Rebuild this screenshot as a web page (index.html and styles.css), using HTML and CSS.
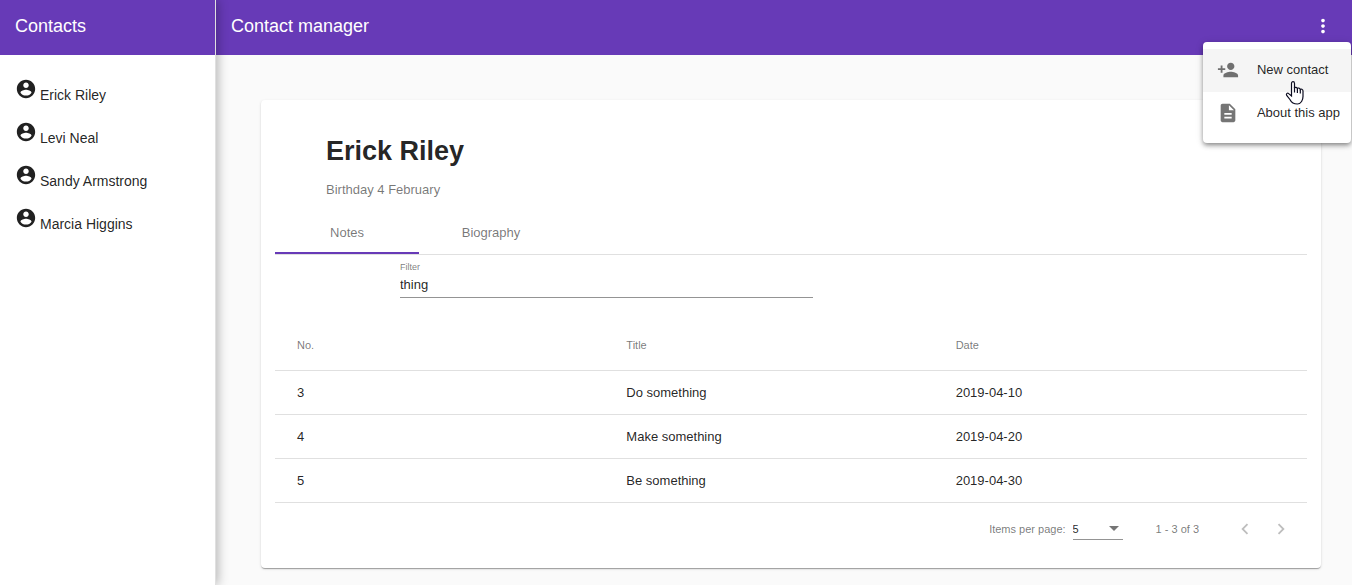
FILE: index.html
```html
<!DOCTYPE html>
<html lang="en">
<head>
<meta charset="utf-8">
<title>Contact manager</title>
<link rel="stylesheet" href="styles.css">
</head>
<body>
<svg class="sprite" aria-hidden="true">
  <symbol id="account" viewBox="0 0 24 24"><path d="M12 2C6.48 2 2 6.48 2 12s4.48 10 10 10 10-4.48 10-10S17.52 2 12 2zm0 3c1.66 0 3 1.34 3 3s-1.34 3-3 3-3-1.34-3-3 1.34-3 3-3zm0 14.2c-2.500 0-4.710-1.280-6-3.220.03-1.990 4-3.080 6-3.080 1.990 0 5.970 1.090 6 3.080-1.290 1.940-3.500 3.220-6 3.220z"/></symbol>
</svg>
<div class="app">
  <aside class="sidebar">
    <div class="toolbar">Contacts</div>
    <nav class="contacts" aria-label="Contacts">
      <a class="contact" href="#erick"><svg class="icon"><use href="#account"/></svg>Erick Riley</a>
      <a class="contact" href="#levi"><svg class="icon"><use href="#account"/></svg>Levi Neal</a>
      <a class="contact" href="#sandy"><svg class="icon"><use href="#account"/></svg>Sandy Armstrong</a>
      <a class="contact" href="#marcia"><svg class="icon"><use href="#account"/></svg>Marcia Higgins</a>
    </nav>
  </aside>
  <div class="main">
    <header class="toolbar">
      <span>Contact manager</span>
      <button class="more" type="button" aria-label="More options">
        <svg class="icon" viewBox="0 0 24 24"><path d="M12 8c1.100 0 2-.9 2-2s-.9-2-2-2-2 .9-2 2 .9 2 2 2zm0 2c-1.100 0-2 .9-2 2s.9 2 2 2 2-.9 2-2-.9-2-2-2zm0 6c-1.100 0-2 .9-2 2s.9 2 2 2 2-.9 2-2-.9-2-2-2z"/></svg>
      </button>
      <div class="menu">
        <button class="menu-item active" type="button">
          <svg class="icon" viewBox="0 0 24 24"><path d="M15 12c2.210 0 4-1.790 4-4s-1.790-4-4-4-4 1.790-4 4 1.790 4 4 4zm-9-2V7H4v3H1v2h3v3h2v-3h3v-2H6zm9 4c-2.670 0-8 1.340-8 4v2h16v-2c0-2.660-5.330-4-8-4z"/></svg>
          <span>New contact</span>
        </button>
        <button class="menu-item" type="button">
          <svg class="icon" viewBox="0 0 24 24"><path d="M14 2H6c-1.100 0-1.990.9-1.990 2L4 20c0 1.100.89 2 1.990 2H18c1.100 0 2-.9 2-2V8l-6-6zm2 16H8v-2h8v2zm0-4H8v-2h8v2zm-3-5V3.500L18.500 9H13z"/></svg>
          <span>About this app</span>
        </button>
        <svg class="cursor" viewBox="0 0 20 26" aria-hidden="true"><path d="M6.500 16V3.500c0-2.500 3-2.500 3 0V8c.3-1 2.600-.9 2.900.6.500-1 2.600-.7 2.900.9.600-.8 2.700-.4 2.700 1.500v5.500c0 3.400-1.900 7.500-5.600 7.500-3.900 0-6.100-1.700-7.300-4.300L1.700 15.500c-1-2 .9-3 2-1.900z"/><path d="M9.500 7v5.500M12.400 8.500V13M15.300 9.500V13.500"/></svg>
      </div>
    </header>
    <main class="content">
      <section class="card">
        <div class="card-head">
          <h1 class="name">Erick Riley</h1>
          <p class="birthday">Birthday 4 February</p>
        </div>
        <div class="tabs" role="tablist">
          <button class="tab selected" type="button" role="tab" aria-selected="true">Notes</button>
          <button class="tab" type="button" role="tab" aria-selected="false">Biography</button>
        </div>
        <div class="filter">
          <label class="filter-label" for="filter">Filter</label>
          <input class="filter-input" id="filter" type="text" value="thing">
        </div>
        <table class="notes">
          <thead>
            <tr class="row head"><th>No.</th><th>Title</th><th>Date</th></tr>
          </thead>
          <tbody>
            <tr class="row"><td>3</td><td>Do something</td><td>2019-04-10</td></tr>
            <tr class="row"><td>4</td><td>Make something</td><td>2019-04-20</td></tr>
            <tr class="row"><td>5</td><td>Be something</td><td>2019-04-30</td></tr>
          </tbody>
        </table>
        <div class="paginator">
          <label for="size">Items per page:</label>
          <span class="size">
            <select class="size-select" id="size"><option>5</option><option>10</option></select>
            <svg class="arrow" viewBox="0 0 10 5"><path d="M0 0h10L5 5z"/></svg>
          </span>
          <span class="range">1 - 3 of 3</span>
          <button class="page" type="button" aria-label="Previous page" disabled><svg class="icon" viewBox="0 0 24 24"><path d="M15.410 7.410 14 6l-6 6 6 6 1.410-1.410L10.830 12z"/></svg></button>
          <button class="page" type="button" aria-label="Next page" disabled><svg class="icon" viewBox="0 0 24 24"><path d="M10 6 8.590 7.410 13.170 12l-4.580 4.590L10 18l6-6z"/></svg></button>
        </div>
      </section>
    </main>
  </div>
</div>
</body>
</html>
```

FILE: styles.css
```css
* {
  box-sizing: border-box;
}

body {
  margin: 0;
  background: #fafafa;
  color: rgba(0, 0, 0, 0.87);
  font-family: "Liberation Sans", Arial, sans-serif;
  font-size: 13px;
  line-height: 16px;
}

button,
input,
select {
  margin: 0;
  padding: 0;
  border: 0;
  background: none;
  color: inherit;
  font: inherit;
}

.sprite {
  position: absolute;
  width: 0;
  height: 0;
}

.icon {
  flex: none;
  display: block;
  width: 22px;
  height: 22px;
  fill: currentColor;
}

.app {
  display: flex;
  min-height: 100vh;
}

.sidebar {
  flex: none;
  z-index: 1;
  width: 216px;
  border-right: 1px solid #e0e0e0;
  background: #fff;
  box-shadow: 2px 0 10px rgba(0, 0, 0, 0.28);
}

.toolbar {
  position: relative;
  display: flex;
  align-items: center;
  justify-content: space-between;
  height: 55px;
  padding: 0 18px 3px 15px;
  background: #673ab7;
  color: #fff;
  font-size: 18px;
  line-height: 22px;
}

.contacts {
  padding-top: 14px;
}

.contact {
  display: flex;
  align-items: baseline;
  gap: 3px;
  min-height: 43px;
  padding: 9px 15px 0;
  color: inherit;
  font-size: 14px;
  text-decoration: none;
}

.main {
  flex: 1;
  min-width: 0;
}

.menu {
  position: absolute;
  z-index: 2;
  top: 42px;
  right: 1px;
  padding: 7px 0 8px;
  border-radius: 4px;
  background: #fff;
  box-shadow: 0 2px 4px -1px rgba(0, 0, 0, 0.3), 0 3px 5px rgba(0, 0, 0, 0.2), 0 1px 9px rgba(0, 0, 0, 0.12);
  color: rgba(0, 0, 0, 0.87);
  font-size: 13px;
  line-height: 16px;
}

.menu-item {
  display: flex;
  align-items: center;
  gap: 18px;
  width: 100%;
  height: 43px;
  padding: 0 11px 2px 14px;
  white-space: nowrap;
}

.menu-item .icon {
  color: rgba(0, 0, 0, 0.54);
}

.menu-item.active {
  background: #f5f5f5;
}

.cursor {
  position: absolute;
  top: 38px;
  left: 82px;
  width: 20px;
  height: 26px;
  fill: #fff;
  stroke: #0c0c20;
  stroke-width: 1.2;
}

.content {
  padding: 45px 31px 17px 45px;
}

.card {
  padding: 14px;
  border-radius: 4px;
  background: #fff;
  box-shadow: 0 2px 1px -1px rgba(0, 0, 0, 0.2), 0 1px 1px rgba(0, 0, 0, 0.14), 0 1px 3px rgba(0, 0, 0, 0.12);
}

.card-head {
  padding: 21px 51px 12px;
}

.name {
  margin: 0 0 15px;
  font-size: 27px;
  line-height: 32px;
}

.birthday {
  margin: 0;
  color: rgba(0, 0, 0, 0.54);
}

.tabs {
  display: flex;
  border-bottom: 1px solid #e0e0e0;
}

.tab {
  width: 144px;
  height: 44px;
  padding-top: 3px;
  border-bottom: 2px solid transparent;
  color: rgba(0, 0, 0, 0.54);
}

.tab.selected {
  border-color: #673ab7;
}

.filter {
  display: flex;
  flex-direction: column;
  width: 40%;
  margin: 0 0 22px 125px;
  padding-top: 6px;
}

.filter-label {
  color: rgba(0, 0, 0, 0.54);
  font-size: 9px;
  line-height: 12px;
}

.filter-input {
  height: 25px;
  padding-bottom: 2px;
  border-bottom: 1px solid #949494;
}

.notes {
  display: block;
}

.notes thead,
.notes tbody {
  display: block;
}

.row {
  display: flex;
  align-items: center;
  height: 44px;
  padding: 0 22px;
  border-bottom: 1px solid #e0e0e0;
}

.row.head {
  height: 51px;
  color: rgba(0, 0, 0, 0.54);
  font-size: 11px;
}

.row th,
.row td {
  flex: 1;
  padding: 0;
  font-weight: normal;
  text-align: left;
}

.paginator {
  display: flex;
  align-items: center;
  justify-content: flex-end;
  height: 51px;
  padding: 1px 8px 0 0;
  color: rgba(0, 0, 0, 0.54);
  font-size: 11px;
}

.size {
  display: flex;
  align-items: center;
  width: 50px;
  margin: 0 33px 0 7px;
  border-bottom: 1px solid #949494;
}

.size-select {
  flex: 1;
  height: 20px;
  appearance: none;
  color: rgba(0, 0, 0, 0.87);
}

.arrow {
  width: 10px;
  height: 5px;
  margin-right: 4px;
  fill: currentColor;
}

.range {
  margin-right: 28px;
}

.page {
  display: flex;
  justify-content: center;
  width: 36px;
  color: rgba(0, 0, 0, 0.26);
}
```
